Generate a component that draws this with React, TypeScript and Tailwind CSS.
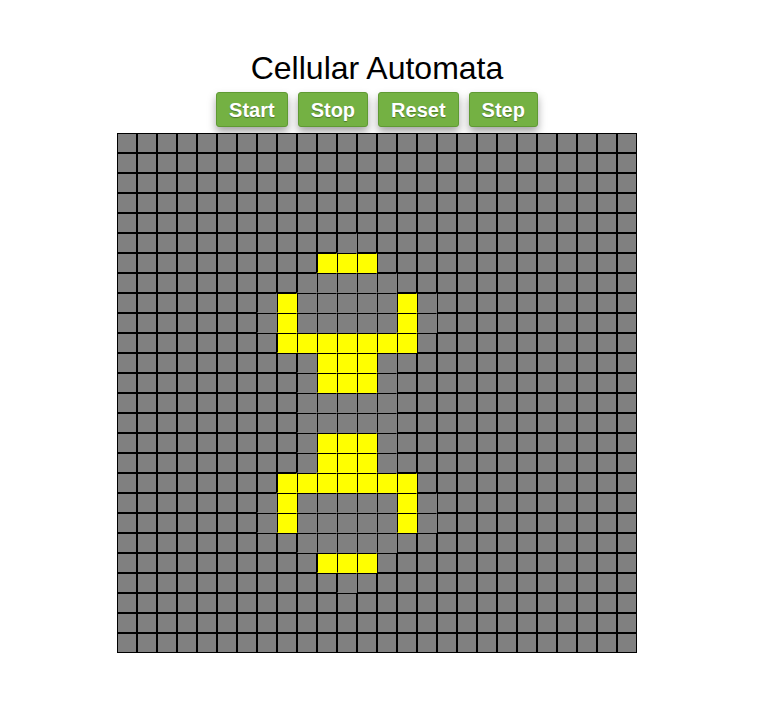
import React from "react"

const SIZE = 26

// top-half rows of live cells, mirrored for the bottom half (row r <-> 27 - r)
const liveTop: Record<number, number[]> = {
  6: [10, 11, 12],
  8: [8, 14],
  9: [8, 14],
  10: [8, 9, 10, 11, 12, 13, 14],
  11: [10, 11, 12],
  12: [10, 11, 12],
}

// cells that were touched recently (drawn with thinner lines)
const touchedTop: Record<number, [number, number]> = {
  5: [11, 11],
  6: [10, 12],
  7: [9, 13],
  8: [7, 15],
  9: [7, 15],
  10: [8, 14],
  11: [9, 13],
  12: [9, 13],
  13: [9, 13],
}

const mirror = (r: number) => (r <= 13 ? r : 27 - r)

const isAlive = (r: number, c: number) => (liveTop[mirror(r)] || []).includes(c)

const isTouched = (r: number, c: number) => {
  const span = touchedTop[mirror(r)]
  return !!span && c >= span[0] && c <= span[1]
}

const Cell: React.FC<{ row: number; col: number }> = ({ row, col }) => {
  const alive = isAlive(row, col)
  const touched = isTouched(row, col) || alive
  const fill = alive ? "bg-[#ffff00]" : "bg-[#808080]"
  const border = touched
    ? alive
      ? "border-t-black border-l-black border-r-[#ffff00] border-b-[#ffff00]"
      : "border-t-black border-l-black border-r-[#808080] border-b-[#808080]"
    : "border-black"
  return <div className={`w-5 h-5 border ${fill} ${border}`} />
}

const buttons = ["Start", "Stop", "Reset", "Step"]

export default function App() {
  const cells = []
  for (let r = 0; r < SIZE; r++) {
    for (let c = 0; c < SIZE; c++) {
      cells.push(<Cell key={`${r}-${c}`} row={r} col={c} />)
    }
  }

  return (
    <div className="min-h-[704px] bg-white font-['Liberation_Sans',Arial,sans-serif]">
      <div className="w-[754px] flex flex-col items-center">
        <h1 className="mt-[50px] text-[32px] leading-[37px] font-normal text-black">
          Cellular Automata
        </h1>
        <div className="mt-[5px] flex gap-[10px]">
          {buttons.map((label) => (
            <button
              key={label}
              className="h-[35px] px-3 pt-[1px] rounded-[3px] border border-[#5f9a33] bg-[#74b143] text-white font-bold text-[20px] leading-none shadow-[0_5px_8px_rgba(0,0,0,0.35)] [text-shadow:0_1px_1px_rgba(0,0,0,0.35)]"
            >
              {label}
            </button>
          ))}
        </div>
        <div className="mt-[6px] grid grid-cols-[repeat(26,20px)]">{cells}</div>
      </div>
    </div>
  )
}
